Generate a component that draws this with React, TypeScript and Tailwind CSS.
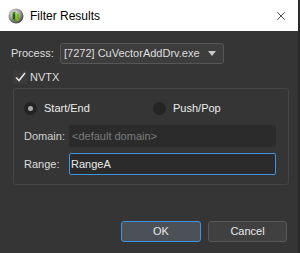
import { X } from "lucide-react";

function NsightIcon() {
  return (
    <svg width="16" height="16" viewBox="0 0 16 16">
      <defs>
        <radialGradient id="g" cx="40%" cy="35%" r="65%">
          <stop offset="0%" stopColor="#f4f4f4" />
          <stop offset="60%" stopColor="#9a9a9a" />
          <stop offset="100%" stopColor="#4a4a4a" />
        </radialGradient>
      </defs>
      <circle cx="8" cy="8" r="7.5" fill="url(#g)" />
      <path d="M4.5 4.5 L7.5 3.5 L7.5 13 L4.5 12 Z" fill="#3f8a12" />
      <path d="M8.5 5 L11 6 L11 12.5 L8.5 13 Z" fill="#76b900" />
      <rect x="5.3" y="6" width="1.4" height="5" fill="#1d4a05" />
    </svg>
  );
}

function Radio({ label, checked }: { label: string; checked?: boolean }) {
  return (
    <div className="flex items-center gap-[7px]">
      <div className="flex h-[13px] w-[13px] items-center justify-center rounded-full bg-[#242424]">
        {checked && <div className="h-[5px] w-[5px] rounded-full bg-[#a8a8a8]" />}
      </div>
      <span className="text-[#ececec]">{label}</span>
    </div>
  );
}

export default function App() {
  return (
    <div
      className="flex h-[253px] w-[300px] bg-[#2a2a2a] text-[11px] text-[#dedede]"
      style={{ fontFamily: '"Liberation Sans", Arial, sans-serif' }}
    >
      <div className="flex h-full w-[298px] flex-col bg-[#353535]">
        {/* Title bar */}
        <div className="flex h-[31px] shrink-0 items-center bg-white pl-[8px] pr-[10px] text-black">
          <NsightIcon />
          <span className="ml-[6px] flex-1 text-[12px]">Filter Results</span>
          <X size={14} strokeWidth={1.2} className="text-black" />
        </div>

        <div className="flex flex-1 flex-col px-[11px] pt-[12px]">
          {/* Process */}
          <div className="flex h-[21px] items-center">
            <span className="w-[49px] whitespace-nowrap">Process:</span>
            <div className="flex h-[21px] w-[164px] items-center justify-between rounded-[3px] border border-[#575757] bg-[#3d3d3d] pl-[3px] pr-[7px]">
              <span className="whitespace-nowrap">[7272] CuVectorAddDrv.exe</span>
              <svg width="8" height="5" viewBox="0 0 8 5">
                <path d="M0 0 L8 0 L4 5 Z" fill="#c8c8c8" />
              </svg>
            </div>
          </div>

          {/* NVTX */}
          <div className="mt-[6px] flex h-[14px] items-center pl-[2px]">
            <div className="flex h-[14px] w-[14px] items-center justify-center bg-[#3b3b3b]">
              <svg width="11" height="10" viewBox="0 0 11 10">
                <path d="M1 5.5 L4 8.5 L10 1" stroke="#e6e6e6" strokeWidth="1.6" fill="none" />
              </svg>
            </div>
            <span className="ml-[3px]">NVTX</span>
          </div>

          {/* Group */}
          <div className="ml-[2px] mt-[4px] h-[97px] w-[276px] rounded-[3px] border border-[#454545] px-[10px] pt-[12px]">
            <div className="flex h-[14px] items-center">
              <div className="w-[129px]">
                <Radio label="Start/End" checked />
              </div>
              <Radio label="Push/Pop" />
            </div>

            <div className="mt-[10px] flex items-center">
              <span className="w-[45px] text-[#d0d0d0]">Domain:</span>
              <div className="flex h-[22px] w-[207px] items-center rounded-[3px] bg-[#2b2b2b] pl-[3px] text-[#7c7c7c]">
                &lt;default domain&gt;
              </div>
            </div>

            <div className="mt-[6px] flex items-center">
              <span className="w-[45px]">Range:</span>
              <div className="flex h-[22px] w-[207px] items-center rounded-[2px] border border-[#3d94e0] bg-[#2b2b2b] pl-[1px] text-[#e8e8e8]">
                RangeA
              </div>
            </div>
          </div>

          {/* Buttons */}
          <div className="mt-[36px] flex justify-end gap-[7px]">
            <button className="h-[21px] w-[80px] rounded-[3px] border border-[#3d94e0] bg-[#4b5157] text-[#e8e8e8]">
              OK
            </button>
            <button className="h-[21px] w-[79px] rounded-[3px] border border-[#585858] bg-[#404040] text-[#e8e8e8]">
              Cancel
            </button>
          </div>
        </div>
      </div>
    </div>
  );
}
